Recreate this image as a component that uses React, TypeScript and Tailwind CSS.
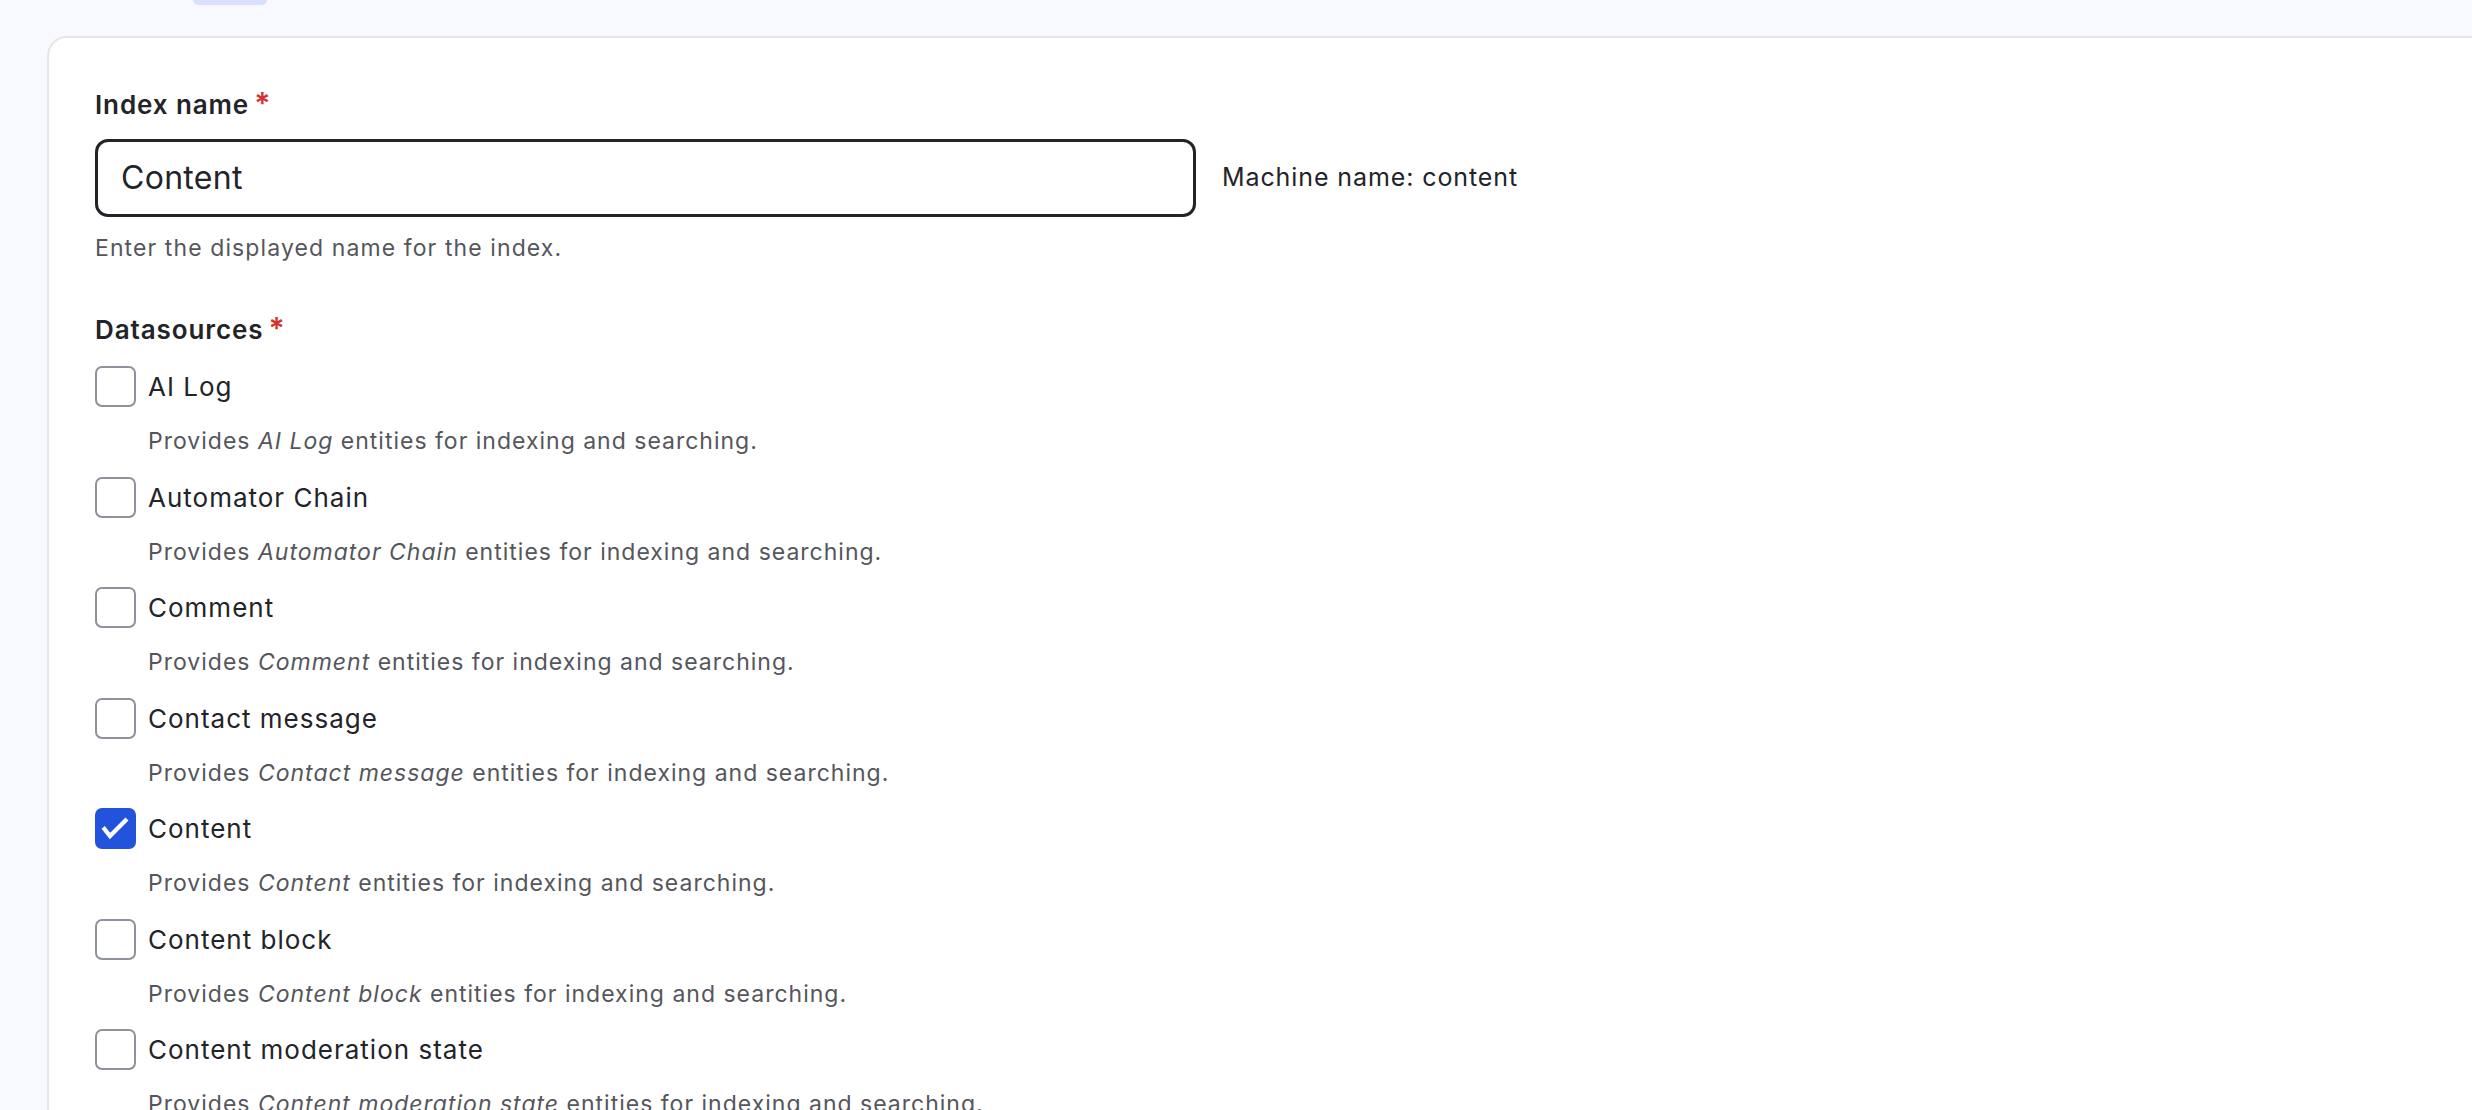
const datasources = [
  { label: "AI Log", checked: false },
  { label: "Automator Chain", checked: false },
  { label: "Comment", checked: false },
  { label: "Contact message", checked: false },
  { label: "Content", checked: true },
  { label: "Content block", checked: false },
  { label: "Content moderation state", checked: false },
];

function Required() {
  return <span className="ml-[5px] mt-[0px] self-start text-[30px] leading-none font-semibold text-[#d4322c]">*</span>;
}

function Checkbox({ checked }: { checked: boolean }) {
  if (checked) {
    return (
      <span className="flex h-[41px] w-[41px] shrink-0 items-center justify-center rounded-[7px] bg-[#2353dc]">
        <svg viewBox="0 0 41 41" className="h-[41px] w-[41px]" fill="none">
          <path d="M9.5 21 L15 28 L30.5 12.5" stroke="white" strokeWidth="4.2" strokeLinecap="square" strokeLinejoin="miter" />
        </svg>
      </span>
    );
  }
  return <span className="h-[41px] w-[41px] shrink-0 rounded-[7px] border-2 border-[#8e929c] bg-white" />;
}

export default function App() {
  return (
    <div className="flex min-h-[1110px] flex-col bg-[#f8f9fe] font-['Inter',sans-serif] text-[#232429]">
      {/* cut-off tab above the card */}
      <div className="h-[36px]">
        <div className="ml-[193px] h-[5px] w-[74px] rounded-b-full bg-[#d9e0fb]" />
      </div>

      <div className="ml-[47px] flex-1 rounded-tl-[20px] border-l-2 border-t-2 border-[#e6e6e6] bg-white pl-[46px] pt-[50px]">
        {/* Index name */}
        <div className="flex items-center text-[26px] leading-[33px] font-semibold tracking-[0.9px]">
          Index name
          <Required />
        </div>
        <div className="mt-[18px] flex items-center gap-[26px]">
          <div className="flex h-[78px] w-[1101px] items-center rounded-[13px] border-[3px] border-[#232429] px-[23px] text-[32px] tracking-[0.3px]">
            Content
          </div>
          <span className="text-[25px] tracking-[0.9px]">Machine name: content</span>
        </div>
        <p className="mt-[16px] text-[23px] leading-[31px] tracking-[1.1px] text-[#55565c]">Enter the displayed name for the index.</p>

        {/* Datasources */}
        <div className="mt-[49px] flex items-center text-[26px] leading-[33px] font-semibold tracking-[0.9px]">
          Datasources
          <Required />
        </div>
        <div className="mt-[20px] flex flex-col gap-[19.5px]">
          {datasources.map((d) => (
            <div key={d.label}>
              <label className="flex items-center gap-[12px]">
                <Checkbox checked={d.checked} />
                <span className="text-[26px] leading-[33px] tracking-[1px]">{d.label}</span>
              </label>
              <p className="mt-[19px] pl-[53px] text-[23px] leading-[31px] tracking-[1px] text-[#55565c]">
                Provides <em>{d.label}</em> entities for indexing and searching.
              </p>
            </div>
          ))}
        </div>
      </div>
    </div>
  );
}
